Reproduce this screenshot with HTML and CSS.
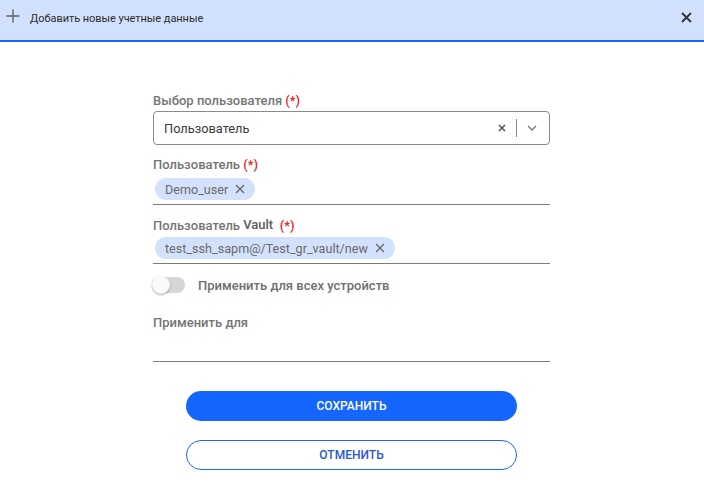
FILE: index.html
```html
<!DOCTYPE html>
<html lang="ru">
<head>
<meta charset="utf-8">
<link rel="stylesheet" href="styles.css">
</head>
<body>
<header class="hdr">
  <div class="hdr-left">
    <svg class="plus" width="14" height="14" viewBox="0 0 14 14"><path d="M7 0.5V13.5M0.5 7H13.5" stroke="#5f6368" stroke-width="1.4"/></svg>
    <span class="hdr-title">Добавить новые учетные данные</span>
  </div>
  <svg class="close" width="11" height="11" viewBox="0 0 11 11"><path d="M1 1L10 10M10 1L1 10" stroke="#333" stroke-width="1.8"/></svg>
</header>
<main class="form">
  <div class="field">
    <div class="lbl">Выбор пользователя <span class="req">(*)</span></div>
    <div class="select">
      <span class="sel-val">Пользователь</span>
      <div class="sel-tools">
        <svg width="8" height="8" viewBox="0 0 8 8"><path d="M1 1L7 7M7 1L1 7" stroke="#555" stroke-width="1.6"/></svg>
        <span class="sep"></span>
        <svg width="10" height="6" viewBox="0 0 10 6"><path d="M1 1L5 5L9 1" stroke="#777" stroke-width="1.3" fill="none"/></svg>
      </div>
    </div>
  </div>
  <div class="field f2">
    <div class="lbl">Пользователь <span class="req">(*)</span></div>
    <div class="chips">
      <span class="chip">Demo_user <svg width="10" height="10" viewBox="0 0 10 10"><path d="M1 1L9 9M9 1L1 9" stroke="#666" stroke-width="1.3"/></svg></span>
    </div>
  </div>
  <div class="field f3">
    <div class="lbl">Пользователь <span class="vault">Vault</span>&nbsp; <span class="req">(*)</span></div>
    <div class="chips c3">
      <span class="chip">test_ssh_sapm@/Test_gr_vault/new <svg width="10" height="10" viewBox="0 0 10 10"><path d="M1 1L9 9M9 1L1 9" stroke="#666" stroke-width="1.3"/></svg></span>
    </div>
  </div>
  <div class="toggle-row">
    <span class="toggle"><span class="knob"></span></span>
    <span class="toggle-lbl">Применить для всех устройств</span>
  </div>
  <div class="field f5">
    <div class="lbl">Применить для</div>
    <div class="empty-input"></div>
  </div>
  <div class="actions">
    <button class="btn primary">СОХРАНИТЬ</button>
    <button class="btn outline">ОТМЕНИТЬ</button>
  </div>
</main>
</body>
</html>
```
FILE: styles.css
```css
* { box-sizing: border-box; }
body {
  margin: 0;
  font-family: Roboto, "Liberation Sans", sans-serif;
  background: #fff;
  width: 704px;
  height: 502px;
  overflow: hidden;
}
.hdr {
  height: 42px;
  background: #d1e1fd;
  border-bottom: 2px solid #1666ff;
  display: flex;
  align-items: center;
  justify-content: space-between;
  padding: 0 12px 2px 6px;
}
.hdr-left { display: flex; align-items: center; gap: 10px; }
.plus { display: block; margin-top: -6px; }
.hdr-title {
  font-size: 11px;
  color: #2d2d2d;
  margin-top: -2px;
  letter-spacing: -0.05px;
}
.close { display: block; margin-top: -4px; }
.form {
  width: 397px;
  margin-left: 153px;
  padding-top: 51px;
}
.lbl {
  font-size: 13px;
  line-height: 16px;
  font-weight: 500;
  color: #757575;
}
.req { color: #e02424; font-weight: 500; }
.vault { color: #5a5a5a; position: relative; top: -1px; }
.select {
  margin-top: 2px;
  height: 34px;
  border: 1px solid #8a8a8a;
  border-radius: 4px;
  display: flex;
  align-items: center;
  justify-content: space-between;
  padding: 0 12px 0 10px;
}
.sel-val { font-size: 12.8px; color: #3a3a3a; }
.sel-tools { display: flex; align-items: center; gap: 0; }
.sel-tools svg { display: block; }
.sep { width: 1px; height: 18px; background: #8a8a8a; margin: 0 10px 0 10px; }
.f2 { margin-top: 12px; }
.chips {
  padding: 5px 2px 4px;
  border-bottom: 1px solid #7c7c7c;
  display: flex;
}
.c3 { padding-top: 3px; }
.f3 { margin-top: 13px; }
.chip {
  height: 22px;
  border-radius: 11px;
  background: #d3e2fc;
  color: #6a6a6a;
  font-size: 12.6px;
  display: inline-flex;
  align-items: center;
  gap: 7px;
  padding: 0 10px 0 10px;
}
.chip svg { display: block; }
.toggle-row {
  margin-top: 12px;
  display: flex;
  align-items: center;
  height: 18px;
}
.toggle {
  position: relative;
  width: 33px;
  height: 16px;
  border-radius: 8px;
  background: #d6d6d6;
  margin-left: -1px;
}
.knob {
  position: absolute;
  left: 0;
  top: -1px;
  width: 18px;
  height: 18px;
  border-radius: 50%;
  background: #fafafa;
  box-shadow: 0 1px 2px rgba(0,0,0,0.35);
}
.toggle-lbl {
  margin-left: 13px;
  font-size: 13px;
  font-weight: 500;
  color: #707070;
}
.f5 { margin-top: 21px; }
.empty-input {
  height: 31px;
  border-bottom: 1px solid #7c7c7c;
}
.actions {
  display: flex;
  flex-direction: column;
  align-items: center;
  gap: 19px;
  margin-top: 29px;
}
.btn {
  width: 331px;
  height: 30px;
  border-radius: 15px;
  font-family: Roboto, "Liberation Sans", sans-serif;
  font-size: 12px;
  font-weight: 500;
  cursor: pointer;
}
.primary {
  background: #1565ff;
  border: none;
  color: #fff;
}
.outline {
  background: #fff;
  border: 1px solid #1565ff;
  color: #2a55d6;
}
```
